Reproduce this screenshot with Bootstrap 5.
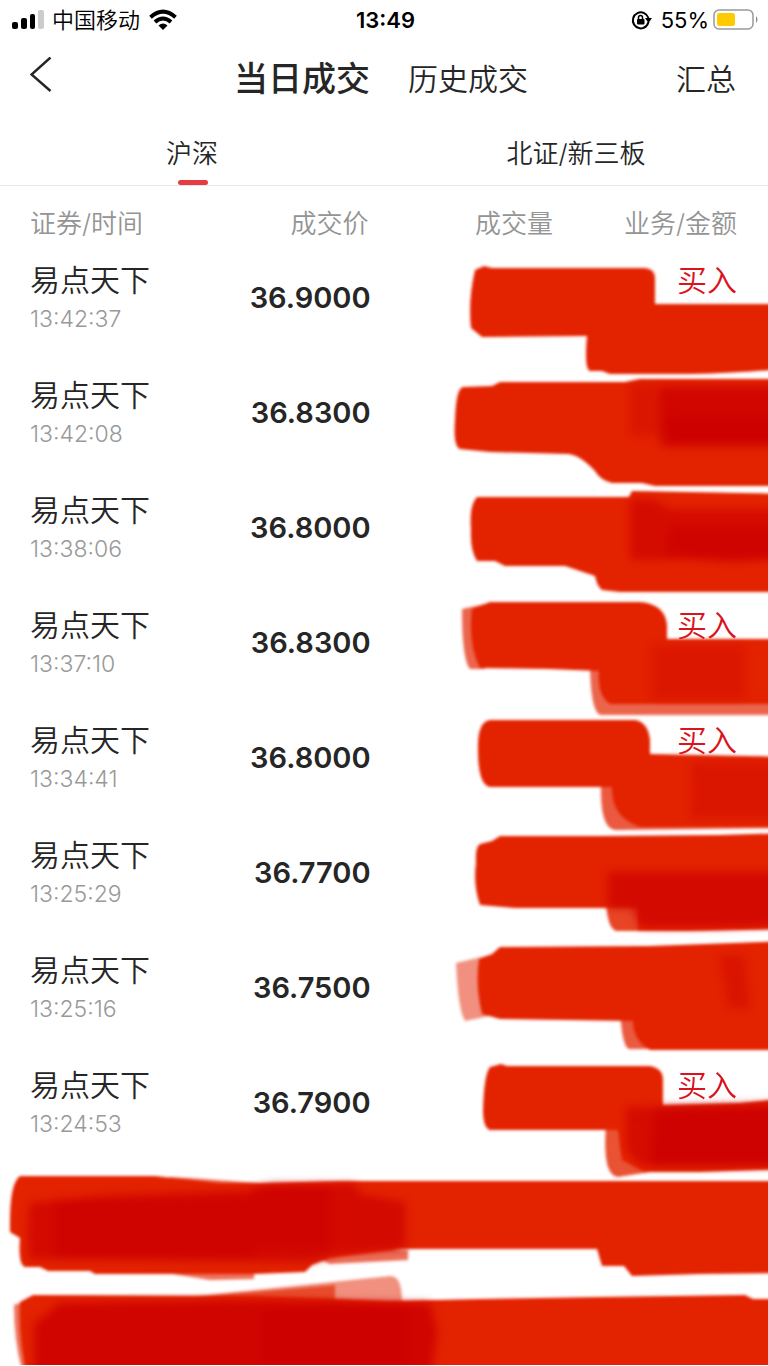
<!DOCTYPE html>
<html lang="zh-CN">
<head>
<meta charset="utf-8">
<meta name="viewport" content="width=device-width, initial-scale=1">
<title>当日成交</title>
<link href="https://cdn.jsdelivr.net/npm/bootstrap@5.3.0/dist/css/bootstrap.min.css" rel="stylesheet">
<style>
  body { font-family: Inter, "Noto Sans CJK SC", sans-serif; color: #262626; background: #fff; }
  .page { overflow: hidden; }
  .status-bar { height: 40px; padding: 0 9px 0 12px; font-size: 22px; line-height: 38px; color: #000; }
  .carrier { font-weight: 350; }
  .status-side { flex: 1 1 0; }
  .title-bar { height: 76px; padding: 2px 32px 0 30px; font-size: 30px; line-height: 44px; font-weight: 350; }
  .plain-btn { background: none; border: 0; padding: 0; color: inherit; font-size: inherit; font-weight: inherit; line-height: inherit; }
  .title-tabs { gap: 38px; padding-right: 4px; }
  .title-bar .current { font-size: 34px; font-weight: 500; }
  .market-tabs { height: 70px; border-bottom: 1px solid #e6e6e6; font-weight: 350; }
  .market-tabs .plain-btn { font-size: 26px; line-height: 36px; padding-top: 6px; position: relative; }
  .market-tabs .active::after { content: ""; position: absolute; left: 50%; bottom: 0; width: 30px; height: 5px; margin-left: -14px; border-radius: 3px; background: #e53b41; }
  .deals { table-layout: fixed; }
  .deals th { font-size: 26px; line-height: 32px; font-weight: 350; color: #949494; padding: 22px 0 0; white-space: nowrap; }
  .deals td { height: 115px; padding: 0; }
  .deals th:first-child, .deals td:first-child { padding-left: 30px; }
  .deals th:last-child, .deals td:last-child { padding-right: 31px; }
  .deals .c1 { width: 28%; } .deals .c2 { width: 20%; } .deals .c3 { width: 24%; }
  .stock { font-size: 30px; line-height: 36px; padding-top: 22px; white-space: nowrap; font-weight: 350; }
  .clock { font-size: 23px; line-height: 30px; padding-top: 6px; color: #999; font-weight: 350; }
  .price { font-size: 29px; font-weight: 600; }
  .price span { margin-right: -2px; }
  .side { color: #d9141e; }
  .stroke { position: absolute; right: 0; top: 0; width: 340px; height: 115px; overflow: visible; pointer-events: none; }
  .stroke-wide { display: block; width: 100%; height: auto; }
  .r { fill: #e32402; } .d { fill: #cc0000; }
</style>
</head>
<body>
<div class="page">
  <header>
    <div class="status-bar d-flex align-items-center">
      <div class="status-side d-flex align-items-center">
        <svg width="32" height="20" viewBox="0 0 32 20" aria-hidden="true"><rect y="12" width="6" height="7" rx="2"/><rect x="9" y="8" width="6" height="11" rx="2"/><rect x="18" y="4" width="5" height="15" rx="2"/><rect x="26" width="6" height="19" rx="2" fill="#ccc"/></svg>
        <span class="carrier ms-2">中国移动</span>
        <svg class="ms-2" width="30" height="22" viewBox="0 0 30 22" aria-hidden="true"><g fill="none" stroke="#000" stroke-width="4"><path d="M2.500 8.200Q15-2.800 27.500 8.200"/><path d="M7 13Q15 6 23 13"/></g><path d="M10.500 16.500Q15 12.700 19.500 16.500L15 21Z"/></svg>
      </div>
      <strong class="fw-semibold">13:49</strong>
      <div class="status-side d-flex align-items-center justify-content-end">
        <svg width="22" height="20" viewBox="0 0 22 20" aria-hidden="true"><path d="M15 16.500A8 8 0 1 1 17.500 8" fill="none" stroke="#000" stroke-width="2"/><path d="M17.500 12A8 8 0 0 1 13 17.500" fill="none" stroke="#000" stroke-width="2"/><path d="M14 8h7l-3.500 5z"/><rect x="6" y="9" width="7.500" height="5.500" rx="1"/><path d="M7.500 9V7.500a2 2 0 0 1 4 0V9" fill="none" stroke="#000" stroke-width="1.500"/></svg>
        <span class="ms-2 me-1">55%</span>
        <svg width="46" height="22" viewBox="0 0 46 22" aria-hidden="true"><rect x="1" y="1" width="39" height="19" rx="5" fill="none" stroke="#999" stroke-width="1.500"/><rect x="4" y="4" width="18" height="13" rx="2.500" fill="#fecb00"/><path d="M43 7q3 3.500 0 7z" fill="#888"/></svg>
      </div>
    </div>
    <div class="title-bar d-flex align-items-center">
      <div class="status-side d-flex"><button class="plain-btn d-flex" aria-label="返回"><svg width="24" height="44" viewBox="0 0 24 44"><path d="M20.500 .5L1.500 17.500l19 16.500" fill="none" stroke="#262626" stroke-width="2.500"/></svg></button></div>
      <div class="title-tabs d-flex align-items-center">
        <button class="plain-btn current">当日成交</button>
        <button class="plain-btn">历史成交</button>
      </div>
      <div class="status-side text-end"><button class="plain-btn">汇总</button></div>
    </div>
    <nav class="market-tabs d-flex">
      <button class="plain-btn active w-50">沪深</button>
      <button class="plain-btn w-50">北证/新三板</button>
    </nav>
  </header>
  <main>
    <table class="deals w-100">
      <thead><tr><th class="c1">证券/时间</th><th class="c2 text-end">成交价</th><th class="c3 text-end">成交量</th><th class="text-end">业务/金额</th></tr></thead>
      <tbody>
        <tr><td class="align-top"><div class="stock">易点天下</div><div class="clock">13:42:37</div></td><td class="price text-end"><span>36.9000</span></td><td></td><td class="position-relative align-top text-end"><div class="stock side">买入</div>
          <svg class="stroke" viewBox="428 240 340 115" aria-hidden="true"><g filter="url(#soft)"><path class="r" d="M475 270L484 266L492 268H645Q655 269 655 278V304H790V368Q745 373 690 374L610 374L602 371L590 371Q584 369 587 336L482 337L471 328Q468 300 475 270Z"/></g></svg></td></tr>
        <tr><td class="align-top"><div class="stock">易点天下</div><div class="clock">13:42:08</div></td><td class="price text-end"><span>36.8300</span></td><td></td><td class="position-relative">
          <svg class="stroke" viewBox="428 355 340 115" aria-hidden="true"><g filter="url(#soft)"><path class="r" d="M463 387L492 386L500 382H625L640 379H790V486H655L642 483H612Q600 480 595 471Q580 455 568 454L490 452L460 449Q453 446 455 420Q456 388 463 387Z"/></g><g filter="url(#haze)"><path class="d" opacity=".35" d="M630 384H790V448H665V436H630Z"/><path class="d" opacity=".75" d="M660 388H790V446H660Z"/><path class="d" opacity=".8" d="M664 418H790V441H672Z"/></g></svg></td></tr>
        <tr><td class="align-top"><div class="stock">易点天下</div><div class="clock">13:38:06</div></td><td class="price text-end"><span>36.8000</span></td><td></td><td class="position-relative">
          <svg class="stroke" viewBox="428 470 340 115" aria-hidden="true"><g filter="url(#soft)"><path class="r" d="M477 497H629L632 491L790 494V592H620L602 590Q597 586 595 576L565 566H505L495 561H477Q470 550 471 530Q469 505 477 497Z"/></g><g filter="url(#haze)"><path class="d" opacity=".65" d="M630 499H652L670 509H790V560H630Z"/><path class="d" opacity=".65" d="M670 526H790V555Q730 568 690 556L665 555Z"/></g></svg></td></tr>
        <tr><td class="align-top"><div class="stock">易点天下</div><div class="clock">13:37:10</div></td><td class="price text-end"><span>36.8300</span></td><td></td><td class="position-relative align-top text-end"><div class="stock side">买入</div>
          <svg class="stroke" viewBox="428 585 340 115" aria-hidden="true"><g filter="url(#soft)"><path class="r" opacity=".7" d="M462 609L485 604V669H470Q462 660 462 609ZM590 660H620L790 690V715H600Q590 710 590 660Z"/><path class="r" d="M472 609L490 602H640Q665 604 667 625V639H790V704H610Q597 695 599 671L550 669L480 668Q468 645 472 609Z"/></g><path class="d" filter="url(#haze)" opacity=".3" d="M652 645H745V700H652Z"/></svg></td></tr>
        <tr><td class="align-top"><div class="stock">易点天下</div><div class="clock">13:34:41</div></td><td class="price text-end"><span>36.8000</span></td><td></td><td class="position-relative align-top text-end"><div class="stock side">买入</div>
          <svg class="stroke" viewBox="428 700 340 115" aria-hidden="true"><g filter="url(#soft)"><path class="r" opacity=".75" d="M601 785H630L790 800V828L615 830Q600 828 601 785Z"/><path class="r" d="M490 720H635Q648 722 650 740V754L790 757V827H640Q611 817 612 787H490Q478 785 478 750Q477 722 490 720Z"/></g><path class="d" filter="url(#haze)" opacity=".35" d="M691 762H790V818H691Z"/></svg></td></tr>
        <tr><td class="align-top"><div class="stock">易点天下</div><div class="clock">13:25:29</div></td><td class="price text-end"><span>36.7700</span></td><td></td><td class="position-relative">
          <svg class="stroke" viewBox="428 815 340 115" aria-hidden="true"><g filter="url(#soft)"><path class="r" d="M480 844L492 841L500 836H600L720 835L790 833V929L690 931H638V908H515L480 905Q473 885 476 863Q475 847 480 844Z"/><path class="r" opacity=".85" d="M606 900H650V931H616Q607 928 606 900Z"/></g><path class="d" filter="url(#haze)" opacity=".7" d="M608 872H790V924Q735 929 640 927L632 908H608Z"/></svg></td></tr>
        <tr><td class="align-top"><div class="stock">易点天下</div><div class="clock">13:25:16</div></td><td class="price text-end"><span>36.7500</span></td><td></td><td class="position-relative">
          <svg class="stroke" viewBox="428 930 340 115" aria-hidden="true"><g filter="url(#soft)"><path class="r" opacity=".5" d="M456 963L490 955V1016L465 1021Q458 1010 456 963Z"/><path class="r" opacity=".75" d="M620 1010H660V1049H629Q622 1047 620 1010Z"/><path class="r" d="M479 959L492 954L500 947L650 946L790 941V1050H650Q633 1040 633 1021L500 1019L482 1014Q475 985 479 959Z"/></g><path class="d" filter="url(#haze)" opacity=".4" d="M719 955H744L750 1008H729Z"/></svg></td></tr>
        <tr><td class="align-top"><div class="stock">易点天下</div><div class="clock">13:24:53</div></td><td class="price text-end"><span>36.7900</span></td><td></td><td class="position-relative align-top text-end"><div class="stock side">买入</div>
          <svg class="stroke" viewBox="428 1045 340 115" aria-hidden="true"><g filter="url(#soft)"><path class="r" d="M490 1067L501 1064L507 1066H650Q663 1068 663 1080V1105L740 1103L790 1098V1169L700 1172H645L622 1160L618 1130H490Q483 1128 483 1110Q484 1074 490 1067Z"/><path class="r" opacity=".8" d="M606 1125H650V1172L618 1177Q602 1176 606 1125Z"/></g><g filter="url(#haze)"><path class="d" opacity=".65" d="M626 1107L790 1103V1166H640L626 1150Z"/><path class="d" opacity=".8" d="M655 1109L790 1105V1166H650Z"/></g></svg></td></tr>
      </tbody>
    </table>
    <svg class="stroke-wide" viewBox="0 1160 768 205" aria-hidden="true">
      <defs>
        <filter id="soft" x="-10%" y="-10%" width="120%" height="120%"><feGaussianBlur stdDeviation="1.500"/></filter>
        <filter id="haze" x="-20%" y="-20%" width="140%" height="140%"><feGaussianBlur stdDeviation="4"/></filter>
      </defs>
      <g filter="url(#soft)">
        <path class="r" opacity=".65" d="M170 1177L190 1178L260 1183V1190H160ZM300 1250H408V1260L330 1264ZM160 1272H254V1279L210 1280Z"/>
        <path class="r" d="M20 1176H155L220 1183L260 1183L340 1181H790V1273L700 1274L632 1276L624 1266H602L597 1249H400L330 1258L312 1265L305 1272L255 1274H95L90 1271H48L40 1267H25Q18 1265 20 1238L10 1232Q9 1183 20 1176Z"/>
        <path class="r" opacity=".5" d="M195 1296L390 1276Q402 1275 402 1302H210Z"/>
        <path class="r" opacity=".65" d="M195 1297L335 1285V1305H210ZM14 1305L40 1296V1370H22Q14 1340 14 1305Z"/>
        <path class="r" d="M20 1302L33 1295L260 1296L390 1301L480 1299L600 1297L745 1295L753 1299H790V1380H28Q18 1340 20 1302Z"/>
      </g>
      <g filter="url(#haze)">
        <path class="d" opacity=".7" d="M30 1203L100 1196L250 1190L270 1184H355L360 1194L405 1202V1249L340 1254L310 1262L30 1259Q26 1240 30 1203Z"/>
        <path class="d" opacity=".7" d="M55 1200L255 1198V1257H55ZM253 1187H330V1248H253Z"/>
        <path class="d" opacity=".85" d="M34 1324L60 1303L240 1300L430 1303L437 1330L430 1385H34Z"/>
        <path class="d" opacity=".7" d="M260 1310L340 1303L410 1307V1364H260Z"/>
      </g>
    </svg>
  </main>
</div>
<script src="https://cdn.jsdelivr.net/npm/bootstrap@5.3.0/dist/js/bootstrap.bundle.min.js"></script>
</body>
</html>
